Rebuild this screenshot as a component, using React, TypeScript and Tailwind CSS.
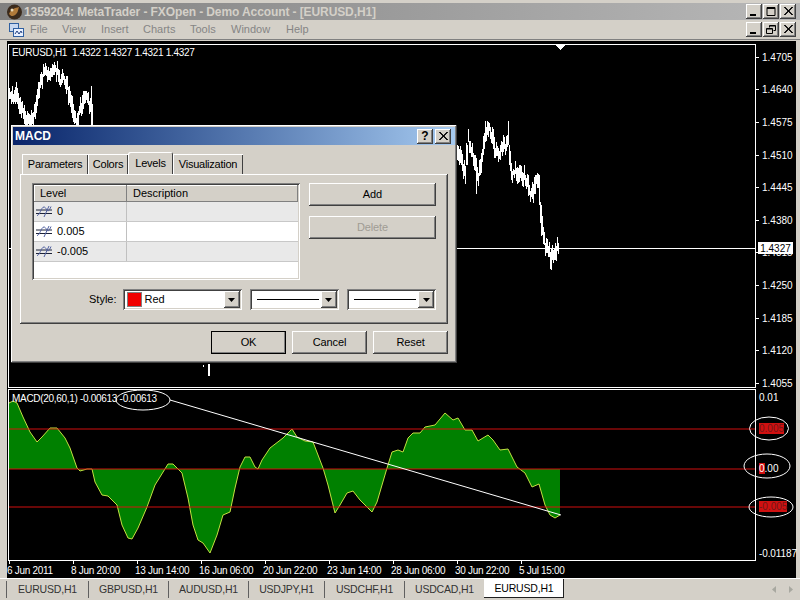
import type { ReactNode } from "react";

const raised = "shadow-[inset_-1px_-1px_0_#404040,inset_1px_1px_0_#ffffff,inset_-2px_-2px_0_#808080]";
const sunken = "shadow-[inset_1px_1px_0_#808080,inset_-1px_-1px_0_#ffffff,inset_2px_2px_0_#404040,inset_-2px_-2px_0_#d4d0c8]";

const priceLeft: number[][] = [[9,90],[12,95],[15,90],[18,100],[22,110],[26,118],[30,122],[33,118],[36,105],[40,80],[44,75],[48,72],[52,68],[56,72],[60,80],[63,78],[66,85],[70,100],[73,115],[76,125],[80,110],[84,100],[88,100],[91,105],[93,120]];
const priceRight: number[][] = [[457,150],[462,165],[465,172],[468,140],[472,150],[476,170],[478,178],[482,155],[485,135],[488,128],[492,135],[495,155],[500,150],[505,145],[508,140],[510,165],[512,172],[516,172],[520,175],[525,178],[528,185],[530,195],[533,192],[535,182],[537,178],[539,190],[540,215],[541,225],[543,235],[545,245],[547,250],[549,255],[551,260],[553,256],[556,250],[558,247],[559,250]];

const macd: number[][] = [[9,403],[13,401],[17,403],[23,417],[30,432],[37,442],[42,437],[50,428],[57,428],[65,438],[70,448],[77,468],[80,471],[87,469],[92,469],[95,482],[102,495],[108,496],[117,505],[122,525],[128,538],[132,539],[138,528],[147,507],[155,485],[160,477],[168,464],[173,464],[182,473],[188,498],[193,525],[198,540],[203,543],[210,553],[217,535],[223,515],[230,512],[235,488],[240,467],[245,457],[250,457],[255,467],[258,469],[262,460],[270,448],[283,438],[292,429],[297,437],[305,441],[313,442],[318,455],[323,468],[328,485],[335,513],[340,505],[347,493],[353,491],[360,500],[372,512],[377,502],[382,485],[387,468],[392,452],[398,450],[403,452],[408,438],[413,433],[420,433],[425,427],[435,425],[445,413],[453,420],[458,418],[465,430],[472,430],[478,441],[488,435],[493,440],[500,450],[508,449],[517,467],[525,473],[532,487],[539,484],[545,505],[550,515],[555,518],[560,515]];

const xLabels = ["6 Jun 2011", "8 Jun 20:00", "13 Jun 14:00", "16 Jun 06:00", "20 Jun 22:00", "23 Jun 14:00", "28 Jun 06:00", "30 Jun 22:00", "5 Jul 15:00"];
const priceLabels = ["1.4705", "1.4640", "1.4575", "1.4510", "1.4445", "1.4380", "1.4315", "1.4250", "1.4185", "1.4120", "1.4055"];
const symbols = [
  { name: "EURUSD,H1", width: "w-[82px]" },
  { name: "GBPUSD,H1", width: "w-[80px]" },
  { name: "AUDUSD,H1", width: "w-[80px]" },
  { name: "USDJPY,H1", width: "w-[76px]" },
  { name: "USDCHF,H1", width: "w-[80px]" },
  { name: "USDCAD,H1", width: "w-[80px]" },
];

// high-low bars around an interpolated close, with a fixed pseudo noise
function priceBars(points: number[][]) {
  const bars: string[] = [];
  const noise = (v: number) => Math.abs(Math.sin(v * 12.9898) * 43758.5453) % 1;
  for (let i = 0; i < points.length - 1; i++) {
    const [x0, y0] = points[i];
    const [x1, y1] = points[i + 1];
    for (let x = x0; x < x1; x++) {
      const y = y0 + ((y1 - y0) * (x - x0)) / (x1 - x0);
      const slope = Math.abs(y1 - y0) / (x1 - x0);
      const jitter = (noise(x + 0.37) - 0.5) * 9;
      const up = 2 + noise(x) * 7 + slope / 2;
      const down = 2 + noise(x + 0.71) * 7 + slope / 2;
      bars.push(`M${x + 0.5} ${(y + jitter - up).toFixed(0)}V${(y + jitter + down).toFixed(0)}`);
    }
  }
  return bars.join("");
}

const WinButton = ({ children }: { children: ReactNode }) => (
  <div className={`flex h-[15px] w-[16px] items-center justify-center bg-[#d4d0c8] ${raised}`}>
    <svg width="10" height="9" viewBox="0 0 10 9" fill="none" stroke="#000">
      {children}
    </svg>
  </div>
);

const MinIcon = () => <path d="M1 7.5h6M1 8.5h6" />;
const CloseIcon = () => <path d="M1 0l8 8M2 0l8 8M9 0L1 8M10 0L2 8" strokeWidth="0.9" />;

const DialogButton = ({ label, disabled, primary }: { label: string; disabled?: boolean; primary?: boolean }) => (
  <div
    className={`flex h-[23px] items-center justify-center bg-[#d4d0c8] text-[11px] tracking-[-0.1px] ${raised} ${primary ? "outline outline-1 -outline-offset-1 outline-black" : ""} ${
      disabled ? "text-[#a09c94]" : "text-black"
    }`}
  >
    {label}
  </div>
);

const Combo = ({ width, children }: { width: string; children: ReactNode }) => (
  <div className={`flex h-[21px] items-center bg-white p-[2px] ${sunken} ${width}`}>
    <div className="flex min-w-0 flex-1 items-center pl-[3px]">{children}</div>
    <div className={`flex h-[17px] w-[16px] items-center justify-center bg-[#d4d0c8] ${raised}`}>
      <svg width="7" height="4" viewBox="0 0 7 4">
        <path d="M0 0h7L3.5 4z" fill="#000" />
      </svg>
    </div>
  </div>
);

const LevelIcon = () => (
  <svg width="17" height="11" viewBox="0 0 17 11" fill="none">
    <path d="M0 4h16M0 7.5h16" stroke="#1c2238" />
    <path d="M1 9.5C4 9.5 5 1 8 1s3 9 7-0.5M13 0L8 11" stroke="#4f5fa0" />
  </svg>
);

const Tab = ({ label, active, width }: { label: string; active?: boolean; width: string }) => (
  <div
    className={`flex items-center justify-center text-[11px] tracking-[-0.25px] text-black ${width} ${
      active
        ? "relative z-10 h-[22px] rounded-t-[2px] bg-[#d4d0c8] shadow-[inset_1px_1px_0_#ffffff,inset_-1px_0_0_#404040]"
        : "mt-[2px] h-[20px] shadow-[inset_1px_1px_0_#ffffff,inset_-1px_0_0_#404040]"
    }`}
  >
    {label}
  </div>
);

const LevelRow = ({ value, shaded }: { value: string; shaded: boolean }) => (
  <div className={`flex h-[20px] border-b border-[#c8c8c8] text-[11px] ${shaded ? "bg-[#e9e9e9]" : "bg-white"}`}>
    <div className="flex w-[93px] items-center gap-[4px] border-r border-[#c0c0c0] pl-[2px]">
      <LevelIcon />
      <span>{value}</span>
    </div>
  </div>
);

const MacdDialog = () => (
  <div className={`absolute left-[11px] top-[125px] flex h-[238px] w-[446px] flex-col bg-[#d4d0c8] p-[2px] ${raised}`}>
    <div className="flex h-[18px] items-center justify-between bg-gradient-to-r from-[#0a246a] to-[#a6caf0] pl-[2px] pr-[4px]">
      <span className="text-[12px] font-bold text-white">MACD</span>
      <div className="flex gap-[2px]">
        <div className={`flex h-[15px] w-[16px] items-center justify-center bg-[#d4d0c8] text-[12px] font-bold leading-none ${raised}`}>?</div>
        <WinButton>
          <CloseIcon />
        </WinButton>
      </div>
    </div>

    <div className="flex-1 px-[7px] pt-[7px]">
      <div className="flex h-[22px] pl-[2px]">
        <Tab label="Parameters" width="w-[66px]" />
        <Tab label="Colors" width="w-[40px]" />
        <Tab label="Levels" width="w-[45px]" active />
        <Tab label="Visualization" width="w-[70px]" />
      </div>
      <div className={`h-[150px] px-[12px] pt-[9px] ${raised}`}>
        <div className="flex gap-[8px]">
          <div className={`h-[97px] w-[270px] bg-white p-[2px] ${sunken}`}>
            <div className="flex h-[17px] items-center bg-[#d4d0c8] text-[11px] shadow-[inset_-1px_-1px_0_#808080,inset_1px_1px_0_#ffffff]">
              <div className="w-[93px] border-r border-[#808080] pl-[6px]">Level</div>
              <div className="pl-[6px]">Description</div>
            </div>
            <LevelRow value="0" shaded />
            <LevelRow value="0.005" shaded={false} />
            <LevelRow value="-0.005" shaded />
          </div>
          <div className="ml-px flex w-[128px] flex-col gap-[10px]">
            <DialogButton label="Add" />
            <DialogButton label="Delete" disabled />
          </div>
        </div>
        <div className="mt-[9px] flex items-center text-[11px]">
          <span className="ml-[57px] mr-[6px]">Style:</span>
          <Combo width="w-[120px]">
            <span className="mr-[4px] h-[13px] w-[13px] bg-[#f00000] outline outline-1 outline-[#808080]" />
            <span>Red</span>
          </Combo>
          <Combo width="ml-[8px] w-[90px]">
            <span className="mx-[2px] h-px flex-1 bg-black" />
          </Combo>
          <Combo width="ml-[8px] w-[90px]">
            <span className="mx-[2px] h-px flex-1 bg-black" />
          </Combo>
        </div>
      </div>
      <div className="mt-[7px] flex justify-end gap-[6px]">
        <div className="w-[75px]">
          <DialogButton label="OK" primary />
        </div>
        <div className="w-[75px]">
          <DialogButton label="Cancel" />
        </div>
        <div className="w-[75px]">
          <DialogButton label="Reset" />
        </div>
      </div>
    </div>
  </div>
);

const PriceChart = () => (
  <div className="flex h-[347px] pt-[3px] pl-px">
    <div className="relative h-[344px] w-[748px] border border-white">
      <svg className="block" width="746" height="342" viewBox="9 45 746 342" shapeRendering="crispEdges">
        <path d={priceBars(priceLeft)} stroke="#fff" fill="none" />
        <path d={priceBars(priceRight)} stroke="#fff" fill="none" />
        <path d="M76.5 118V130M91.5 86V125M476.5 160V194M485.5 121V135M541.5 205V235M551.5 250V270M208.5 364V376M209.5 364V376M203.5 365V367" stroke="#fff" fill="none" />
        <path d="M9 248.5H755" stroke="#fff" fill="none" />
        <path d="M555 45h10l-5 5z" fill="#fff" />
      </svg>
      <span className="absolute left-[3px] top-[1px] text-[10px] leading-[14px] tracking-[-0.3px] whitespace-pre text-white">EURUSD,H1  1.4322 1.4327 1.4321 1.4327</span>
    </div>
    <div className="relative flex-1 text-[10px] text-white">
      <div className="-mt-[3px]">
        {priceLabels.map((p) => (
          <div key={p} className="flex h-[32.6px] items-center">
            <span className="mr-[3px] h-px w-[3px] bg-white" />
            <span>{p}</span>
          </div>
        ))}
      </div>
      <span className="absolute left-[2px] top-[198px] flex h-[12px] w-[35px] items-center justify-center bg-white text-[10px] text-black">1.4327</span>
    </div>
  </div>
);

const MacdChart = () => {
  const line = macd.map(([x, y]) => `${x},${y}`).join(" ");
  return (
    <div className="relative flex h-[190px] pl-px">
      <div className="w-[748px] pt-px">
        <div className="relative h-[172px] border border-white">
          <svg className="block" width="746" height="170" viewBox="9 390 746 170">
            <polygon points={`9,469 ${line} 560,469`} fill="#008000" />
            <polyline points={line} fill="none" stroke="#c4e040" strokeWidth="1" />
            <path d="M9 429H755M9 469H755M9 507H755" stroke="#e01010" strokeOpacity="0.62" strokeWidth="1.3" fill="none" />
          </svg>
          <span className="absolute left-[3px] top-[2px] text-[10px] leading-[14px] tracking-[-0.3px] text-white">MACD(20,60,1) -0.00613 -0.00613</span>
        </div>
        <div className="flex">
          {xLabels.map((l) => (
            <div key={l} className="w-[64px] text-[10px] leading-[14px] tracking-[-0.3px] text-white">
              <div className="ml-px h-[3px] w-px bg-white" />
              <div className="-ml-px whitespace-nowrap">{l}</div>
            </div>
          ))}
        </div>
      </div>
      <div className="flex-1 pl-[3px] pt-[4px] text-[10px] leading-[12px] text-white">
        <div>0.01</div>
        <div className="mt-[19px]">
          <span className="bg-[#d01010] text-[#701818]">0.005</span>
        </div>
        <div className="mt-[28px]">
          <span className="bg-[#d01010]">0</span>.00
        </div>
        <div className="mt-[26px]">
          <span className="bg-[#d01010] text-[#701818]">-0.005</span>
        </div>
        <div className="mt-[35px] tracking-[-0.1px]">-0.01187</div>
      </div>
      {/* hand drawn markup on top of the chart */}
      <svg className="pointer-events-none absolute left-[-7px] top-0" width="800" height="190" viewBox="0 388 800 190" fill="none" stroke="#fff">
        <ellipse cx="143" cy="400" rx="27" ry="10" />
        <path d="M170 400L561 515" />
        <ellipse cx="769" cy="428.5" rx="19.5" ry="11.5" />
        <ellipse cx="767" cy="466" rx="23" ry="12" />
        <ellipse cx="771" cy="507" rx="22" ry="10" />
      </svg>
    </div>
  );
};

export default function App() {
  return (
    <div className="relative flex h-[600px] w-[800px] flex-col overflow-hidden bg-[#d4d0c8] font-['Liberation_Sans',sans-serif]">
      <div className="mt-[3px] flex h-[17px] items-center bg-gradient-to-r from-[#808080] to-[#b8b8b8] pl-[6px] pr-[4px]">
        <svg width="17" height="16" viewBox="0 0 17 16">
          <circle cx="8.5" cy="8" r="7.5" fill="#3a2a1c" />
          <path d="M3 10c2-5 6-6 10-7-1 3-1 6-4 8s-4 1-6-1z" fill="#b07a3a" />
          <circle cx="6" cy="6" r="1.5" fill="#e8d8b8" />
        </svg>
        <span className="ml-px flex-1 text-[12px] font-bold tracking-[-0.1px] text-[#d4d0c8]">1359204: MetaTrader - FXOpen - Demo Account - [EURUSD,H1]</span>
        <div className="flex gap-px">
          <WinButton>
            <MinIcon />
          </WinButton>
          <WinButton>
            <path d="M1 1.5h8M1 .5h8v8H1z" />
          </WinButton>
          <WinButton>
            <CloseIcon />
          </WinButton>
        </div>
      </div>

      <div className="flex h-[20px] items-center border-b border-[#808080] pl-[9px] pr-[4px] text-[11px] text-[#858585]">
        <svg width="15" height="14" viewBox="0 0 15 14" fill="none">
          <rect x="0.5" y="0.5" width="9" height="8" fill="#c8d8f0" stroke="#3060a0" />
          <rect x="4.5" y="5.5" width="10" height="8" fill="#e8f0ff" stroke="#3060a0" />
          <path d="M6 11l2-3 2 3 2-3 1 2" stroke="#204080" />
        </svg>
        <div className="ml-[6px] flex flex-1">
          <span className="w-[32px]">File</span>
          <span className="w-[39px]">View</span>
          <span className="w-[42px]">Insert</span>
          <span className="w-[47px]">Charts</span>
          <span className="w-[41px]">Tools</span>
          <span className="w-[55px]">Window</span>
          <span>Help</span>
        </div>
        <div className="flex gap-px">
          <WinButton>
            <MinIcon />
          </WinButton>
          <WinButton>
            <path d="M3.5 2.5V.5h6v5h-2M.5 3.5h6v5h-6zM.5 4h6M3.5 1h6" />
          </WinButton>
          <WinButton>
            <CloseIcon />
          </WinButton>
        </div>
      </div>

      <div className="ml-[7px] mr-[4px] mt-px h-[537px] bg-black">
        <PriceChart />
        <MacdChart />
      </div>

      <div className="flex h-[22px] items-center border-t border-white pl-[6px] pr-[7px] text-[10.5px] tracking-[-0.2px] text-[#333333]">
        {symbols.map((s) => (
          <div key={s.name} className={`flex h-[17px] items-center justify-center border-l border-[#606060] ${s.width}`}>
            {s.name}
          </div>
        ))}
        <div className="-mt-[2px] flex h-[19px] w-[80px] items-center justify-center bg-white text-black shadow-[inset_-1px_-1px_0_#202020]">EURUSD,H1</div>
        <div className="ml-auto flex gap-[11px]">
          <svg width="5" height="7" viewBox="0 0 5 7">
            <path d="M4 0v7L0 3.5z" fill="#a8a8a0" />
          </svg>
          <svg width="5" height="7" viewBox="0 0 5 7">
            <path d="M1 0v7l4-3.5z" fill="#a8a8a0" />
          </svg>
        </div>
      </div>

      <MacdDialog />
    </div>
  );
}
